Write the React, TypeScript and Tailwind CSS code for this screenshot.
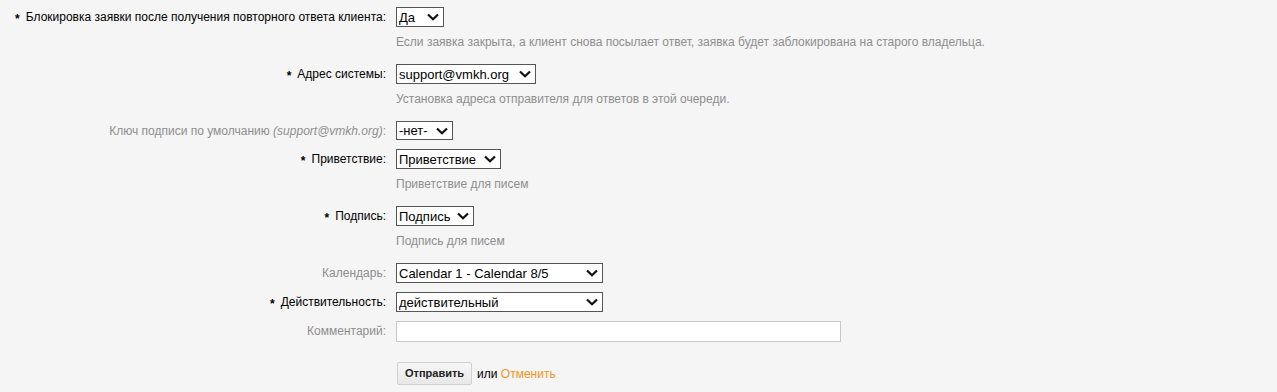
import React from "react";

type Row = {
    label: string;
    labelNote?: string;
    required?: boolean;
    value?: string;
    width: string;
    height?: string;
    description?: string;
    input?: boolean;
};

const rows: Row[] = [
    {
        label: "Блокировка заявки после получения повторного ответа клиента:",
        required: true,
        value: "Да",
        width: "w-[48px]",
        description:
            "Если заявка закрыта, а клиент снова посылает ответ, заявка будет заблокирована на старого владельца.",
    },
    {
        label: "Адрес системы:",
        required: true,
        value: "support@vmkh.org",
        width: "w-[140px]",
        description: "Установка адреса отправителя для ответов в этой очереди.",
    },
    {
        label: "Ключ подписи по умолчанию",
        labelNote: "(support@vmkh.org)",
        value: "-нет-",
        width: "w-[57px]",
        height: "h-[19px]",
    },
    {
        label: "Приветствие:",
        required: true,
        value: "Приветствие",
        width: "w-[105px]",
        description: "Приветствие для писем",
    },
    {
        label: "Подпись:",
        required: true,
        value: "Подпись",
        width: "w-[78px]",
        description: "Подпись для писем",
    },
    { label: "Календарь:", value: "Calendar 1 - Calendar 8/5", width: "w-[207px]" },
    { label: "Действительность:", required: true, value: "действительный", width: "w-[207px]" },
    { label: "Комментарий:", width: "w-[445px]", input: true },
];

const Chevron = () => (
    <svg width="12" height="8" viewBox="0 0 12 8" className="pointer-events-none absolute right-[5px] top-1/2 -translate-y-1/2">
        <path d="M1 1.5 L6 6.3 L11 1.5" fill="none" stroke="#111" strokeWidth="2.2" />
    </svg>
);

const Field: React.FC<{ row: Row }> = ({ row }) => {
    if (row.input) {
        return <input type="text" className={`h-[21px] ${row.width} border border-[#c8c8c8] bg-white outline-none`} />;
    }
    const h = row.height ?? "h-5";
    return (
        <div className={`relative ${h} ${row.width}`}>
            <select
                defaultValue={row.value}
                className={`${h} w-full appearance-none border border-[#555] bg-white pl-[2px] pr-4 text-[13px] leading-[17px] text-black outline-none`}
            >
                <option>{row.value}</option>
            </select>
            <Chevron />
        </div>
    );
};

export default function App() {
    return (
        <div className="min-h-[392px] w-full bg-[#f5f5f5] pt-[7px] font-['Liberation_Sans',Arial,sans-serif] text-[12px]">
            {rows.map((row, i) => (
                <div key={i} className="mb-[9px] flex gap-[10px]">
                    <label
                        className={`flex ${row.height ?? "h-5"} w-[386px] shrink-0 items-center justify-end ${
                            row.required ? "text-black" : "text-[#8e8e8e]"
                        }`}
                    >
                        {row.required && <span className="relative top-[2px] mr-[6px] font-bold">*</span>}
                        <span>
                            {row.label}
                            {row.labelNote && (
                                <>
                                    {" "}
                                    <i>{row.labelNote}</i>:
                                </>
                            )}
                        </span>
                    </label>
                    <div className="flex flex-col">
                        <Field row={row} />
                        {row.description && (
                            <p className="mt-[7px] mb-[5px] leading-4 text-[#8e8e8e]">{row.description}</p>
                        )}
                    </div>
                </div>
            ))}

            <div className="mt-[20px] flex items-center gap-[5px] pl-[397px]">
                <button className="h-[23px] rounded-[2px] border border-[#d0d0d0] bg-gradient-to-b from-[#f6f6f6] to-[#e8e8e8] px-[7px] text-[11px] font-bold text-[#222]">
                    Отправить
                </button>
                <span className="text-black">
                    или <a className="text-[#f7941d]">Отменить</a>
                </span>
            </div>
        </div>
    );
}
